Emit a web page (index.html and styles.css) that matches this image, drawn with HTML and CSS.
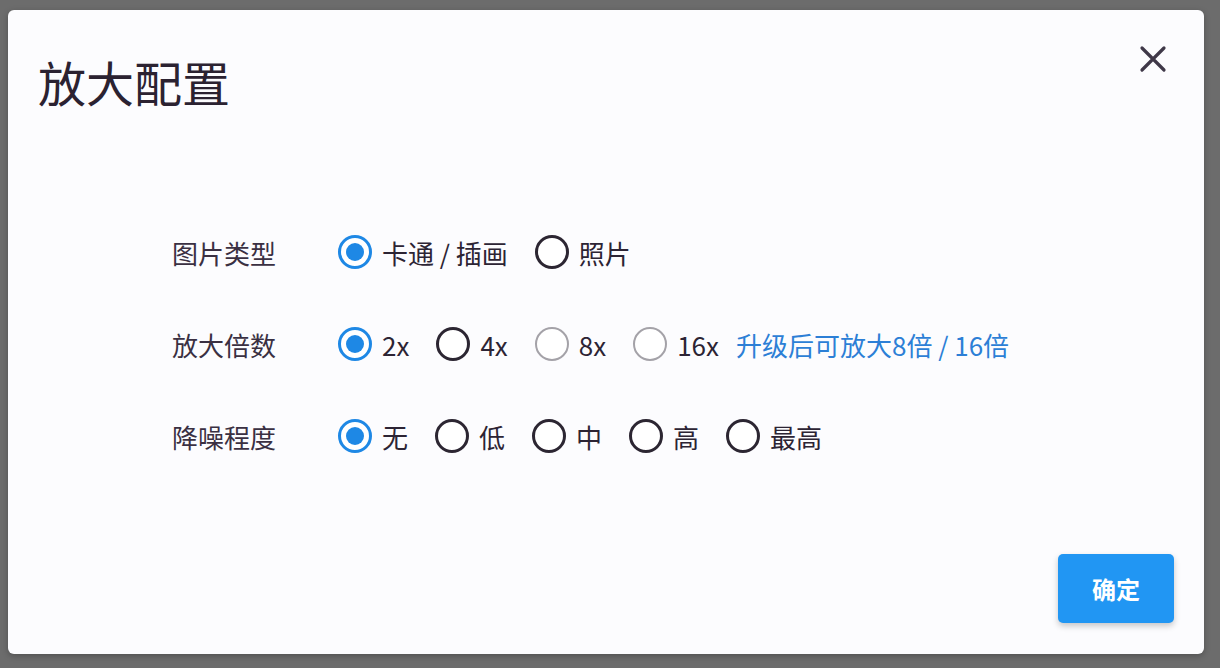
FILE: index.html
```html
<!DOCTYPE html>
<html lang="zh-CN">
<head>
<meta charset="utf-8">
<title>放大配置</title>
<link rel="stylesheet" href="styles.css">
</head>
<body>
<div class="backdrop">
  <div class="modal">
    <div class="modal-header">
      <h1 class="modal-title">放大配置</h1>
      <button class="close-btn" aria-label="关闭">
        <svg width="28" height="28" viewBox="0 0 28 28"><path d="M3 3 L25 25 M25 3 L3 25" stroke="#3f3848" stroke-width="3.2" stroke-linecap="round"/></svg>
      </button>
    </div>
    <div class="form">
      <div class="form-row">
        <div class="form-label">图片类型</div>
        <div class="options">
          <label class="option"><span class="radio checked"></span><span class="opt-text">卡通 / 插画</span></label>
          <label class="option"><span class="radio"></span><span class="opt-text">照片</span></label>
        </div>
      </div>
      <div class="form-row">
        <div class="form-label">放大倍数</div>
        <div class="options">
          <label class="option"><span class="radio checked"></span><span class="opt-text">2x</span></label>
          <label class="option"><span class="radio"></span><span class="opt-text">4x</span></label>
          <label class="option"><span class="radio disabled"></span><span class="opt-text">8x</span></label>
          <label class="option option-last"><span class="radio disabled"></span><span class="opt-text">16x</span></label>
          <a class="upgrade-link">升级后可放大8倍 / 16倍</a>
        </div>
      </div>
      <div class="form-row">
        <div class="form-label">降噪程度</div>
        <div class="options">
          <label class="option"><span class="radio checked"></span><span class="opt-text">无</span></label>
          <label class="option"><span class="radio"></span><span class="opt-text">低</span></label>
          <label class="option"><span class="radio"></span><span class="opt-text">中</span></label>
          <label class="option"><span class="radio"></span><span class="opt-text">高</span></label>
          <label class="option"><span class="radio"></span><span class="opt-text">最高</span></label>
        </div>
      </div>
    </div>
    <div class="modal-footer">
      <button class="confirm-btn">确定</button>
    </div>
  </div>
</div>
</body>
</html>
```
FILE: styles.css
```css
html, body {
  margin: 0;
  padding: 0;
}
body {
  width: 1220px;
  height: 668px;
  overflow: hidden;
  background: #6c6c6c;
  font-family: "Noto Sans CJK SC", "Noto Sans", sans-serif;
}
.backdrop {
  box-sizing: border-box;
  width: 1220px;
  height: 668px;
  padding: 10px 16px 14px 8px;
}
.modal {
  box-sizing: border-box;
  width: 1196px;
  height: 644px;
  background: #fcfcfe;
  border-radius: 6px;
  display: flex;
  flex-direction: column;
  box-shadow: 0 2px 6px rgba(0,0,0,0.25);
}
.modal-header {
  display: flex;
  justify-content: space-between;
  align-items: flex-start;
  padding: 41px 35px 0 30px;
}
.modal-title {
  margin: 0;
  font-size: 48px;
  font-weight: 400;
  line-height: 60px;
  color: #2b2231;
}
.close-btn {
  margin-top: -8px;
  padding: 0;
  border: none;
  background: none;
  width: 32px;
  height: 32px;
  display: flex;
  align-items: center;
  justify-content: center;
}
.form {
  flex: 1;
  display: flex;
  flex-direction: column;
  gap: 52px;
  padding: 121px 0 0 164px;
}
.form-row {
  display: flex;
  align-items: center;
  height: 40px;
}
.form-label {
  width: 166px;
  font-size: 26px;
  color: #3a3042;
}
.options {
  display: flex;
  align-items: center;
}
.option {
  display: flex;
  align-items: center;
  margin-right: 27px;
}
.option-last {
  margin-right: 17px;
}
.radio {
  box-sizing: border-box;
  width: 34px;
  height: 34px;
  border-radius: 50%;
  border: 3px solid #2c2632;
  margin-right: 10px;
  position: relative;
  background: #fff;
}
.radio.checked {
  border-color: #1e88e5;
}
.radio.checked::after {
  content: "";
  position: absolute;
  left: 5px;
  top: 5px;
  width: 18px;
  height: 18px;
  border-radius: 50%;
  background: #1e88e5;
}
.radio.disabled {
  border: 2px solid #a4a2a8;
}
.opt-text {
  font-size: 26px;
  color: #2c2434;
}
.upgrade-link {
  font-size: 26px;
  color: #2c7fd6;
}
.modal-footer {
  display: flex;
  justify-content: flex-end;
  padding: 0 30px 31px 0;
}
.confirm-btn {
  width: 116px;
  height: 69px;
  border: none;
  border-radius: 5px;
  background: #2196f3;
  color: #fff;
  font-family: "Noto Sans CJK SC", sans-serif;
  font-size: 24px;
  font-weight: 700;
  box-shadow: 0 3px 6px rgba(0,0,0,0.22);
}
```
